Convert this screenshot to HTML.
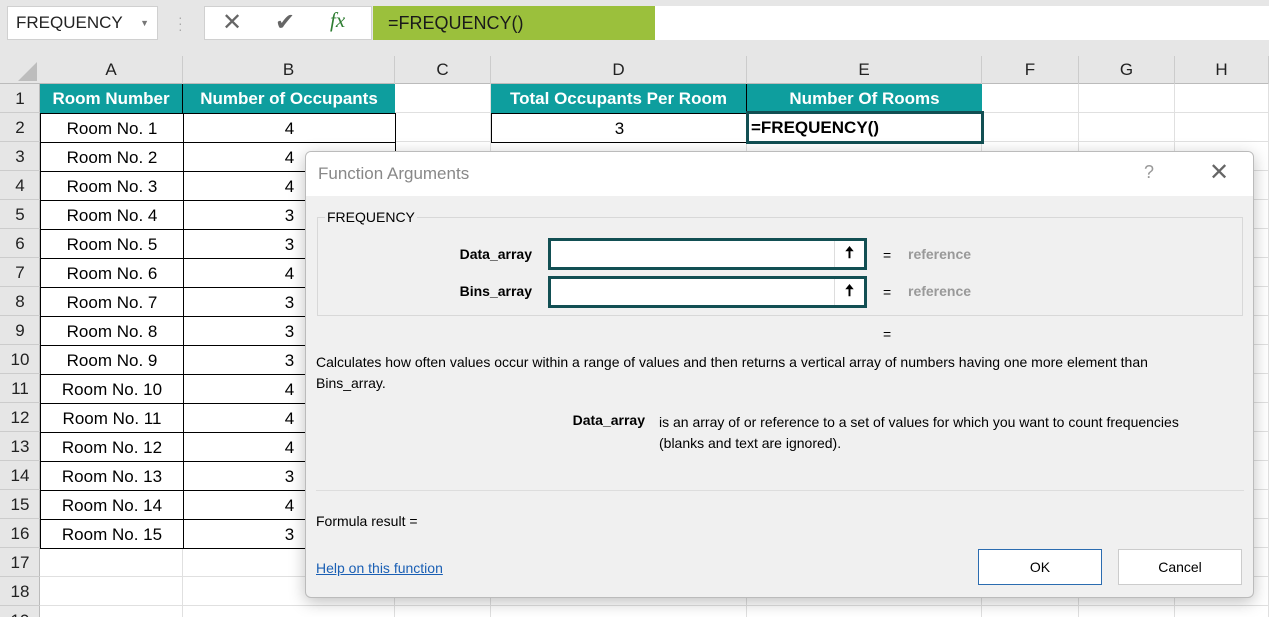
<!DOCTYPE html>
<html style="overflow:hidden;height:617px"><head><style>
body{margin:0;width:1269px;height:617px;overflow:hidden;background:#e6e6e6;font-family:"Liberation Sans",sans-serif;position:relative}
.a{position:absolute;box-sizing:border-box}
.c{position:absolute;box-sizing:border-box;text-align:center;font-size:17px;line-height:29px;white-space:nowrap}
.hd{background:#0e9e9e;color:#fff;font-weight:bold;font-size:17px}
.dlg{font-size:14px;color:#000}
</style></head><body>
<div class="a" style="left:7px;top:6px;width:151px;height:34px;background:#fff;border:1px solid #d0d0d0;font-size:17px;line-height:32px;padding-left:8px;color:#222">FREQUENCY<span style="position:absolute;right:8px;top:0;font-size:9px;color:#777">▼</span></div>
<div class="a" style="left:178px;top:14px;color:#aaa;font-size:14px;line-height:6px">·<br>·<br>·</div>
<div class="a" style="left:204px;top:6px;width:168px;height:34px;background:#fff;border:1px solid #d0d0d0"></div>
<div class="a" style="left:222px;top:8px;font-size:24px;color:#666">✕</div>
<div class="a" style="left:275px;top:8px;font-size:24px;color:#666">✔</div>
<div class="a" style="left:330px;top:8px;font-size:21px;color:#2e7d32;font-style:italic;font-family:'Liberation Serif',serif">fx</div>
<div class="a" style="left:373px;top:6px;width:282px;height:34px;background:#9bc03c;font-size:18px;line-height:34px;padding-left:15px;color:#1a1a1a">=FREQUENCY()</div>
<div class="a" style="left:655px;top:6px;width:614px;height:34px;background:#fff"></div>
<div class="a" style="left:0;top:56px;width:1269px;height:561px;background:#fff"></div>
<div class="a" style="left:0;top:56px;width:1269px;height:28px;background:#e6e6e6;border-bottom:1px solid #bbb"></div>
<div class="a" style="left:0;top:84px;width:40px;height:533px;background:#e6e6e6;border-right:1px solid #bbb"></div>
<svg class="a" style="left:18px;top:62px" width="20" height="20"><polygon points="19,0 19,19 0,19" fill="#bdbdbd"/></svg>
<div id="g"></div>
<div class="a" style="left:305px;top:151px;width:949px;height:447px;background:#f0f0f0;border:1px solid #bbb;border-radius:6px;box-shadow:0 4px 16px rgba(0,0,0,.25);overflow:hidden">
 <div class="a" style="left:0;top:0;width:100%;height:44px;background:#fff"></div>
 <div class="a" style="left:12px;top:12px;font-size:17px;color:#888">Function Arguments</div>
 <div class="a" style="left:838px;top:10px;font-size:18px;color:#999">?</div>
 <div class="a" style="left:903px;top:6px;font-size:24px;color:#666">✕</div>
 <div class="a" style="left:11px;top:65px;width:926px;height:99px;border:1px solid #d8d8d8"></div>
 <div class="a dlg" style="left:19px;top:57px;background:#f0f0f0;padding:0 2px">FREQUENCY</div>
 <div class="a dlg" style="left:130px;top:94px;width:96px;text-align:right;font-weight:bold">Data_array</div>
 <div class="a" style="left:242px;top:86px;width:319px;height:32px;border:3px solid #124f53;background:#fff"><div class="a" style="right:0;top:0;width:30px;height:26px;border-left:1px solid #ddd;font-weight:bold;text-align:center;line-height:26px;font-size:16px">🠅</div></div>
 <div class="a dlg" style="left:577px;top:95px">=</div>
 <div class="a dlg" style="left:602px;top:94px;color:#999;font-weight:bold">reference</div>
 <div class="a dlg" style="left:130px;top:131px;width:96px;text-align:right;font-weight:bold">Bins_array</div>
 <div class="a" style="left:242px;top:124px;width:319px;height:32px;border:3px solid #124f53;background:#fff"><div class="a" style="right:0;top:0;width:30px;height:26px;border-left:1px solid #ddd;font-weight:bold;text-align:center;line-height:26px;font-size:16px">🠅</div></div>
 <div class="a dlg" style="left:577px;top:132px">=</div>
 <div class="a dlg" style="left:602px;top:131px;color:#999;font-weight:bold">reference</div>
 <div class="a dlg" style="left:577px;top:174px">=</div>
 <div class="a dlg" style="left:10px;top:200px;width:895px;line-height:21px">Calculates how often values occur within a range of values and then returns a vertical array of numbers having one more element than Bins_array.</div>
 <div class="a dlg" style="left:200px;top:260px;width:139px;text-align:right;font-weight:bold">Data_array</div>
 <div class="a dlg" style="left:353px;top:260px;width:555px;line-height:21px">is an array of or reference to a set of values for which you want to count frequencies (blanks and text are ignored).</div>
 <div class="a" style="left:10px;top:338px;width:928px;height:1px;background:#ddd"></div>
 <div class="a dlg" style="left:10px;top:361px">Formula result =</div>
 <div class="a dlg" style="left:10px;top:408px;color:#1a5fb4;text-decoration:underline">Help on this function</div>
 <div class="a dlg" style="left:672px;top:397px;width:124px;height:36px;background:#fff;border:1px solid #2b6cb0;text-align:center;line-height:34px">OK</div>
 <div class="a dlg" style="left:812px;top:397px;width:124px;height:36px;background:#fff;border:1px solid #ccc;text-align:center;line-height:34px">Cancel</div>
</div>
<script>
var cols=[40,183,395,491,747,982,1079,1175,1269],L="ABCDEFGH",h="";
for(var i=0;i<8;i++){h+='<div class="c" style="left:'+cols[i]+'px;top:56px;width:'+(cols[i+1]-cols[i])+'px;height:28px;line-height:28px;border-right:1px solid #ccc;color:#222">'+L[i]+'</div>';}
for(var r=1;r<=19;r++){var y=84+(r-1)*29;h+='<div class="c" style="left:0;top:'+y+'px;width:40px;height:29px;color:#222;border-bottom:1px solid #ccc">'+r+'</div>';
 for(var i=0;i<8;i++)h+='<div class="a" style="left:'+cols[i]+'px;top:'+y+'px;width:'+(cols[i+1]-cols[i])+'px;height:29px;border-right:1px solid #e0e0e0;border-bottom:1px solid #e0e0e0"></div>';}
var occ=[4,4,4,3,3,4,3,3,3,4,4,4,3,4,3];
h+='<div class="c hd" style="left:40px;top:84px;width:143px;height:29px;border-right:1px solid #000">Room Number</div>';
h+='<div class="c hd" style="left:183px;top:84px;width:212px;height:29px">Number of Occupants</div>';
h+='<div class="c hd" style="left:491px;top:84px;width:256px;height:29px;border-right:1px solid #000">Total Occupants Per Room</div>';
h+='<div class="c hd" style="left:747px;top:84px;width:235px;height:29px">Number Of Rooms</div>';
for(var k=0;k<15;k++){var y=113+k*29;
h+='<div class="c" style="left:40px;top:'+y+'px;width:144px;height:30px;border:1px solid #000;background:#fff">Room No. '+(k+1)+'</div>';
h+='<div class="c" style="left:183px;top:'+y+'px;width:213px;height:30px;border:1px solid #000;background:#fff">'+occ[k]+'</div>';}
h+='<div class="c" style="left:491px;top:113px;width:257px;height:30px;border:1px solid #000;background:#fff">3</div>';
h+='<div class="c" style="left:746px;top:111px;width:238px;height:33px;border:3px solid #124f53;background:#fff;text-align:left;padding-left:2px;line-height:27px;font-weight:bold">=FREQUENCY()</div>';
document.getElementById("g").innerHTML=h;
</script>
</body></html>
